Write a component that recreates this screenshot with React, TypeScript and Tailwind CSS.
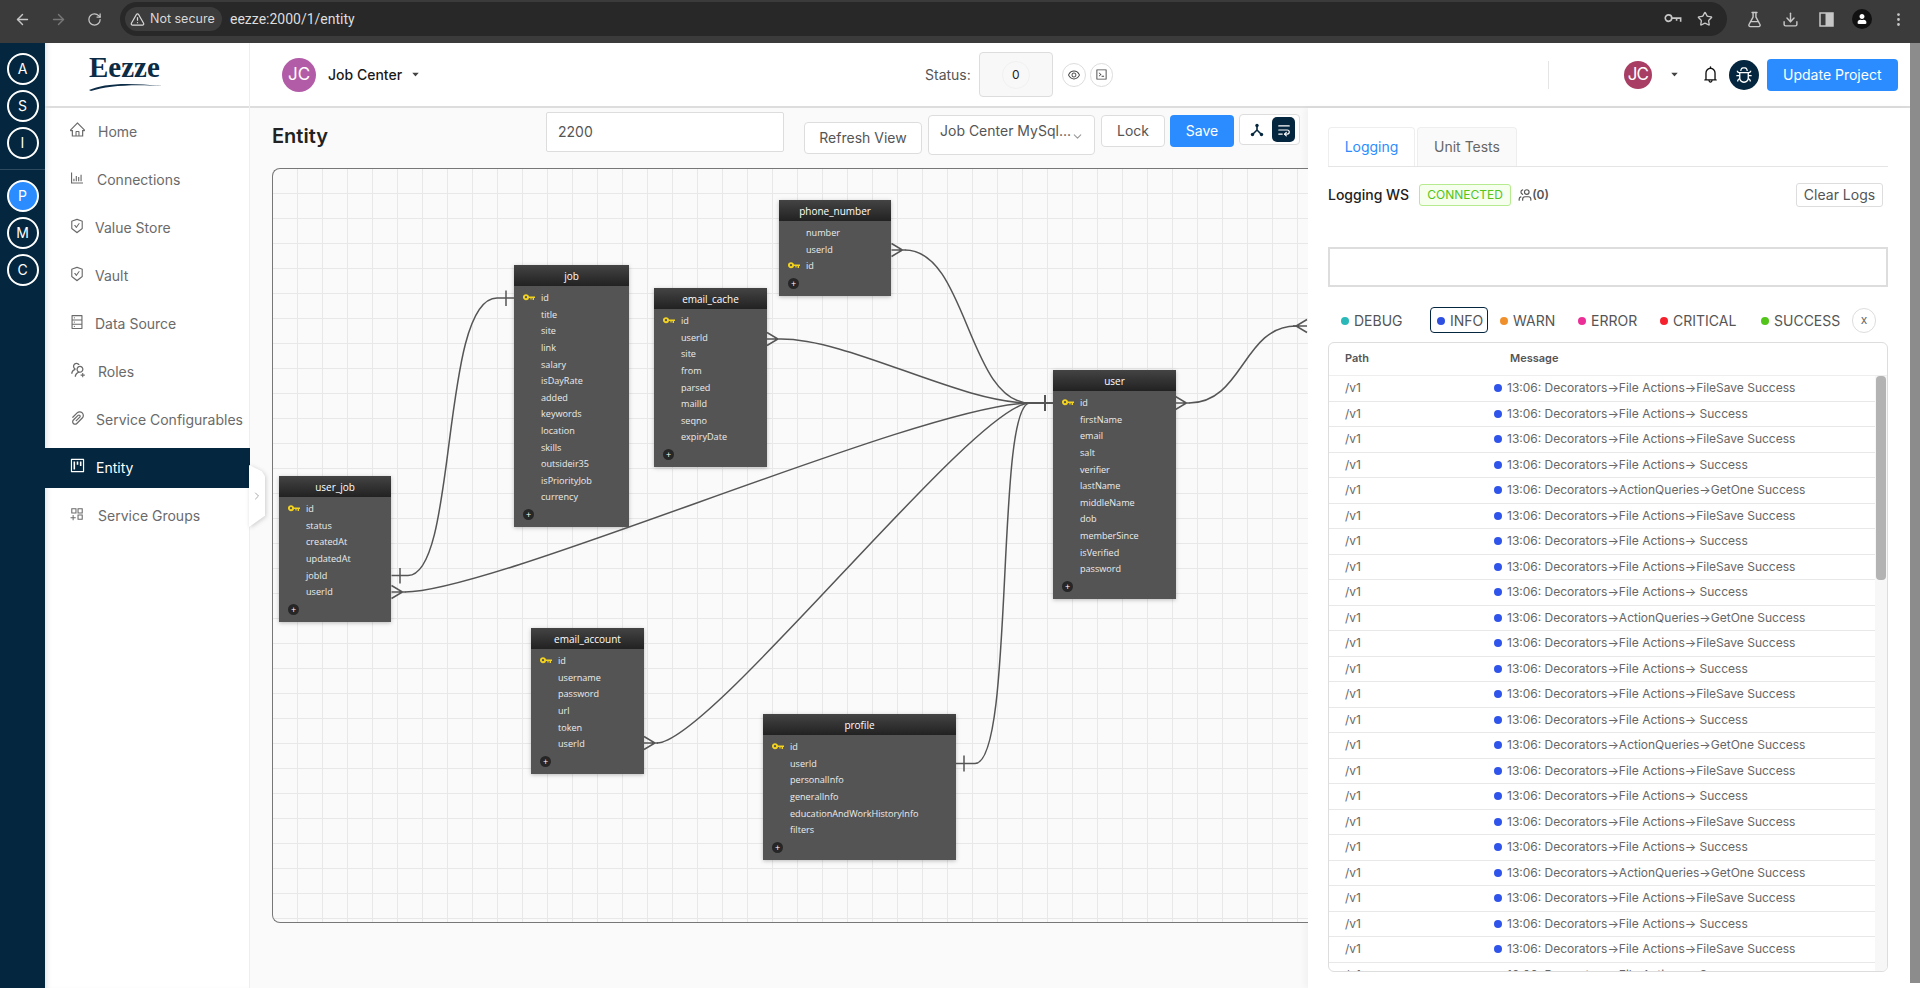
import { ArrowLeft, ArrowRight, ChevronDown, ChevronRight, Download, EllipsisVertical, FlaskConical, RotateCw, Star, TriangleAlert, Users, WrapText } from "lucide-react";
import {
  AiFillCaretDown,
  AiOutlineAppstoreAdd,
  AiOutlineBarChart,
  AiOutlineBell,
  AiOutlineBug,
  AiOutlineCode,
  AiOutlineDatabase,
  AiOutlineEye,
  AiOutlineHome,
  AiOutlinePaperClip,
  AiOutlineProject,
  AiOutlineSafetyCertificate,
  AiOutlineUsergroupAdd,
} from "react-icons/ai";
import { FaUser } from "react-icons/fa";

const navItems = [
  { name: "Home", icon: AiOutlineHome, size: 17, gap: "ml-[12px]" },
  { name: "Connections", icon: AiOutlineBarChart, size: 16, gap: "ml-[12px]" },
  { name: "Value Store", icon: AiOutlineSafetyCertificate, size: 16, gap: "ml-[10px]" },
  { name: "Vault", icon: AiOutlineSafetyCertificate, size: 16, gap: "ml-[10px]" },
  { name: "Data Source", icon: AiOutlineDatabase, size: 16, gap: "ml-[10px]" },
  { name: "Roles", icon: AiOutlineUsergroupAdd, size: 18, gap: "ml-[11px]" },
  { name: "Service Configurables", icon: AiOutlinePaperClip, size: 18, gap: "ml-[9px]" },
  { name: "Entity", icon: AiOutlineProject, size: 17, gap: "ml-[10px]", active: true },
  { name: "Service Groups", icon: AiOutlineAppstoreAdd, size: 16, gap: "ml-[13px]" },
];

const tables = [
  { name: "user_job", pos: "left-[6px] top-[307px] w-[112px]", fields: ["id", "status", "createdAt", "updatedAt", "jobId", "userId"], key: "id" },
  { name: "job", pos: "left-[241px] top-[96px] w-[115px]", fields: ["id", "title", "site", "link", "salary", "isDayRate", "added", "keywords", "location", "skills", "outsideir35", "isPriorityJob", "currency"], key: "id" },
  { name: "email_cache", pos: "left-[381px] top-[119px] w-[113px]", fields: ["id", "userId", "site", "from", "parsed", "mailId", "seqno", "expiryDate"], key: "id" },
  { name: "phone_number", pos: "left-[506px] top-[31px] w-[112px]", fields: ["number", "userId", "id"], key: "id" },
  { name: "user", pos: "left-[780px] top-[201px] w-[123px]", fields: ["id", "firstName", "email", "salt", "verifier", "lastName", "middleName", "dob", "memberSince", "isVerified", "password"], key: "id" },
  { name: "email_account", pos: "left-[258px] top-[459px] w-[113px]", fields: ["id", "username", "password", "url", "token", "userId"], key: "id" },
  { name: "profile", pos: "left-[490px] top-[545px] w-[193px]", fields: ["id", "userId", "personalInfo", "generalInfo", "educationAndWorkHistoryInfo", "filters"], key: "id" },
];

const filters = [
  { name: "DEBUG", dot: "bg-[#2bb8b8]", box: "w-[102px] pl-[13px]" },
  { name: "INFO", dot: "bg-[#2f4fe0]", box: "w-[58px] pl-[6px] h-[26px] border-[1.5px] border-[#04263e] rounded-[4px] mr-[12px]" },
  { name: "WARN", dot: "bg-[#f0902c]", box: "w-[78px]" },
  { name: "ERROR", dot: "bg-[#eb2f96]", box: "w-[82px]" },
  { name: "CRITICAL", dot: "bg-[#f5222d]", box: "w-[101px]" },
  { name: "SUCCESS", dot: "bg-[#52c41a]", box: "w-[91px]" },
];

const save = "13:06: Decorators→File Actions→FileSave Success";
const ok = "13:06: Decorators→File Actions→ Success";
const one = "13:06: Decorators→ActionQueries→GetOne Success";
const logs = Array.from({ length: 24 }, (_, i) => [save, ok, save, ok, one][i % 5]);

function Rail({ letter, active }: { letter: string; active?: boolean }) {
  return (
    <div className={`w-[32px] h-[32px] rounded-full border-2 border-white flex items-center justify-center text-white text-sm ${active ? "bg-[#2a8cff]" : ""}`}>
      {letter}
    </div>
  );
}

function Key() {
  return (
    <svg width="12" height="7" viewBox="0 0 12 7" className="shrink-0">
      <circle cx="3" cy="3.2" r="2.1" fill="none" stroke="#f2d21f" strokeWidth="1.9" />
      <path d="M5 2.4h7v1.6h-1v2h-1.4v-2h-1v1.4h-1.2v-1.4H5z" fill="#f2d21f" />
    </svg>
  );
}

function EntityTable({ t }: { t: (typeof tables)[number] }) {
  return (
    <div className={`absolute ${t.pos} bg-[#545454] shadow-[0_1px_4px_rgba(0,0,0,0.25)] text-[10px] text-[#ececec] font-['Open_Sans',sans-serif]`}>
      <div className="h-[21px] pt-[1px] bg-gradient-to-b from-[#444444] to-[#222222] flex items-center justify-center text-white">{t.name}</div>
      <div className="pt-[3.4px] text-[9.1px]">
        {t.fields.map((f) => (
          <div key={f} className="h-[16.6px] flex items-center pl-[9px]">
            <span className="w-[18px] shrink-0">{f === t.key && <Key />}</span>
            <span className="whitespace-nowrap">{f}</span>
          </div>
        ))}
      </div>
      <div className="h-[22px] pl-[9px] pt-[4px]">
        <div className="w-[11px] h-[11px] rounded-full bg-[#262626] text-white flex items-center justify-center text-[9px] leading-none">+</div>
      </div>
    </div>
  );
}

function Crow({ x, y, dir = 1 }: { x: number; y: number; dir?: number }) {
  return <path d={`M${x} ${y - 6.5} L${x + dir * 11} ${y} L${x} ${y + 6.5} M${x} ${y} L${x + dir * 14} ${y}`} />;
}

function Connectors() {
  return (
    <svg className="absolute left-0 top-0 pointer-events-none" width="1035" height="753" viewBox="273 169 1035 753" fill="none" stroke="#555555" strokeWidth="1.5">
      <Crow x={891.5} y={250} />
      <path d="M905 250 C967 250 968 403 1030 403" />
      <Crow x={767} y={339} />
      <path d="M781 339 C850 339 960 403 1030 403" />
      <Crow x={391.5} y={592} />
      <path d="M405 592 C495 592 925 403 1030 403" />
      <Crow x={644} y={743} />
      <path d="M657 743 C710 743 975 403 1030 403" />
      <path d="M955.5 763.5 H975 M964 755.5 V771.5" />
      <path d="M975 763.5 C1015 763.5 995 403 1030 403" />
      <path d="M391.5 575.5 H408 M400 568 V583.5" />
      <path d="M408 575.5 C458 575.5 440 298 497 298 H514 M506 290.5 V306" />
      <path d="M1030 403 H1053 M1045 395 V411" strokeWidth="2" />
      <Crow x={1175.5} y={403} />
      <path d="M1189 403 C1243 403 1243 326 1296 326" />
      <Crow x={1307} y={326} dir={-1} />
    </svg>
  );
}

export default function App() {
  return (
    <div className="w-[1920px] h-[988px] overflow-hidden flex flex-col bg-white text-sm font-['Inter',sans-serif]">
      {/* browser bar */}
      <div className="h-[43px] shrink-0 bg-[#3b3b3b] flex items-start pt-[2px] pl-[4px] text-[#c7c7c7]">
        <div className="w-[36px] h-[34px] flex items-center justify-center"><ArrowLeft size={17} /></div>
        <div className="w-[36px] h-[34px] flex items-center justify-center text-[#777777]"><ArrowRight size={17} /></div>
        <div className="w-[36px] h-[34px] flex items-center justify-center"><RotateCw size={15} /></div>
        <div className="ml-[8px] w-[1607px] h-[34px] rounded-full bg-[#282828] flex items-center pl-[5px] pr-[14px]">
          <div className="w-[97px] h-[24px] rounded-full bg-[#3c3c3c] flex items-center pl-[5px] text-[12.5px] text-[#d8d8d8] whitespace-nowrap">
            <TriangleAlert size={15} className="mr-[5px] shrink-0" />
            Not secure
          </div>
          <span className="ml-[8px] text-[#dddddd] text-[14px] font-['Roboto',sans-serif]">eezze:2000/1/entity</span>
          <svg width="18" height="12" viewBox="0 0 20 12" fill="none" stroke="#c7c7c7" strokeWidth="1.8" className="ml-auto mr-[15px]">
            <circle cx="5" cy="5" r="3.6" />
            <path d="M8.6 5H18.5V9M14 5V8" />
          </svg>
          <Star size={16} />
        </div>
        <div className="ml-[9px] w-[36px] h-[34px] flex items-center justify-center"><FlaskConical size={17} /></div>
        <div className="w-[36px] h-[34px] flex items-center justify-center"><Download size={17} /></div>
        <div className="w-[36px] h-[34px] flex items-center justify-center">
          <svg width="15" height="15" viewBox="0 0 15 15">
            <path d="M1 1h13v13H1z" fill="none" stroke="#c7c7c7" strokeWidth="1.5" />
            <path d="M6.5 1h7.5v13H6.5z" fill="#c7c7c7" />
          </svg>
        </div>
        <div className="w-[36px] h-[34px] flex items-center justify-center">
          <div className="w-[20px] h-[20px] rounded-full bg-[#111111] flex items-center justify-center text-white"><FaUser size={10} /></div>
        </div>
        <div className="w-[36px] h-[34px] flex items-center justify-center"><EllipsisVertical size={17} /></div>
      </div>

      <div className="flex-1 flex min-h-0">
        {/* project rail */}
        <div className="w-[45px] shrink-0 bg-[#04263e] pt-[10px] flex flex-col">
          <div className="flex flex-col items-center gap-[5px] pb-[10px] border-b border-[#2d4a5f]">
            <Rail letter="A" />
            <Rail letter="S" />
            <Rail letter="I" />
          </div>
          <div className="flex flex-col items-center gap-[5px] pt-[10px]">
            <Rail letter="P" active />
            <Rail letter="M" />
            <Rail letter="C" />
          </div>
        </div>

        {/* sidebar */}
        <div className="relative z-10 w-[205px] shrink-0 bg-white border-r border-[#eeeeee] shadow-[inset_5px_0_5px_-3px_rgba(4,38,62,0.12)]">
          <div className="h-[65px] border-b-2 border-[#dddddd] pl-[44px] pt-[11px]">
            <div className="w-[74px] text-[#0c2c46] font-['Liberation_Serif',serif] font-bold text-[29px] leading-[27px]">Eezze</div>
            <svg width="76" height="9" viewBox="0 0 74 9" className="-ml-[1px] mt-[1px]">
              <path d="M0 8C14 2 34 0 74 4C40 2 18 4 2 9Z" fill="#0c2c46" />
            </svg>
          </div>
          <div className="pt-[4px]">
            {navItems.map((item) => (
              <div key={item.name} className={`w-[205px] h-[40px] mb-[8px] pl-[24px] flex items-center whitespace-nowrap ${item.active ? "bg-[#04263e] text-white" : "text-[#6a6a6a]"}`}>
                <item.icon size={item.size} className="mb-[5px] shrink-0" />
                <span className={item.gap}>{item.name}</span>
              </div>
            ))}
          </div>
          <div className="absolute -right-[16px] top-[422px] w-[16px] h-[62px] drop-shadow-[1px_1px_2px_rgba(0,0,0,0.18)]">
            <div className="w-full h-full bg-white [clip-path:polygon(0_0,80%_10%,100%_18%,100%_82%,0_100%)] flex items-center justify-center text-[#aaaaaa]">
              <ChevronRight size={12} />
            </div>
          </div>
        </div>

        <div className="flex-1 flex flex-col min-w-0">
          {/* top header */}
          <div className="h-[65px] shrink-0 border-b-2 border-[#dddddd] flex items-center pl-[32px] pr-[12px]">
            <div className="w-[34px] h-[34px] shrink-0 rounded-full bg-[#b25ca8] text-white text-[17px] flex items-center justify-center">JC</div>
            <span className="ml-[12px] font-medium text-[#1a1a1a] whitespace-nowrap w-[74px]">Job Center</span>
            <AiFillCaretDown size={9} className="ml-[9px] text-[#444444] shrink-0" />
            <span className="ml-[505px] text-[#555555]">Status:</span>
            <div className="ml-[8px] w-[74px] h-[45px] shrink-0 bg-[#f8f8f8] border border-[#dddddd] rounded-[4px] flex items-center justify-center text-xs text-[#222222]">
              <div className="w-[28px] h-[28px] rounded-full border border-[#f1f1f1] flex items-center justify-center">0</div>
            </div>
            <div className="ml-[9px] w-[24px] h-[24px] shrink-0 rounded-full border border-[#dddddd] flex items-center justify-center text-[#444444]"><AiOutlineEye size={14} /></div>
            <div className="ml-[4px] w-[23px] h-[24px] shrink-0 rounded-full border border-[#dddddd] flex items-center justify-center text-[#444444]"><AiOutlineCode size={13} /></div>
            <div className="ml-[435px] w-px h-[28px] bg-[#e5e5e5] shrink-0" />
            <div className="ml-[75px] w-[28px] h-[28px] shrink-0 rounded-full bg-[#a83e63] text-white text-[17px] flex items-center justify-center tracking-[-1px]">JC</div>
            <AiFillCaretDown size={9} className="ml-[18px] text-[#444444] shrink-0" />
            <AiOutlineBell size={19} className="ml-[22px] text-[#111111] shrink-0" />
            <div className="ml-[9px] w-[30px] h-[30px] shrink-0 rounded-full bg-[#04263e] flex items-center justify-center text-white"><AiOutlineBug size={18} /></div>
            <div className="ml-[8px] w-[131px] h-[32px] shrink-0 rounded-[4px] bg-[#2a8cff] text-white flex items-center justify-center">Update Project</div>
          </div>

          <div className="flex-1 flex min-h-0">
            {/* entity canvas */}
            <div className="w-[1058px] shrink-0 bg-[#fafafa] pl-[22px] overflow-hidden">
              <div className="h-[60px] flex items-start text-[#555555]">
                <h1 className="mt-[14px] w-[274px] text-[20px] font-semibold text-[#222222]">Entity</h1>
                <div className="mt-[4px] w-[238px] h-[40px] bg-white border border-[#dddddd] rounded-[2px] pl-[11px] flex items-center">2200</div>
                <div className="mt-[14px] ml-[20px] w-[118px] h-[32px] bg-white border border-[#dddddd] rounded-[4px] flex items-center justify-center">Refresh View</div>
                <div className="mt-[7px] ml-[6px] w-[167px] h-[40px] bg-white border border-[#dddddd] rounded-[4px] pl-[11px] pt-[5px] whitespace-nowrap relative">
                  Job Center MySql...
                  <ChevronDown size={13} className="absolute right-[10px] top-[14px] text-[#999999]" />
                </div>
                <div className="mt-[7px] ml-[6px] w-[64px] h-[32px] bg-white border border-[#dddddd] rounded-[4px] flex items-center justify-center">Lock</div>
                <div className="mt-[7px] ml-[5px] w-[64px] h-[32px] bg-[#2a8cff] text-white rounded-[4px] flex items-center justify-center">Save</div>
                <div className="mt-[6px] ml-[5px] w-[61px] h-[31px] bg-white border border-[#dddddd] rounded-[4px] flex items-center pl-[10px] gap-[8px] shrink-0">
                  <svg width="14" height="14" viewBox="0 0 14 14" fill="none" stroke="#04263e" strokeWidth="1.6">
                    <path d="M7 2.5V7L2.5 11.5M7 7l4.5 4.5" />
                    <circle cx="7" cy="2.5" r="1.7" fill="#04263e" stroke="none" />
                    <circle cx="2.5" cy="11.5" r="1.7" fill="#04263e" stroke="none" />
                    <circle cx="11.5" cy="11.5" r="1.7" fill="#04263e" stroke="none" />
                  </svg>
                  <div className="w-[23px] h-[25px] rounded-[5px] bg-[#04263e] flex items-center justify-center text-white"><WrapText size={14} /></div>
                </div>
              </div>
              <div className="relative w-[1036px] h-[755px] border border-r-0 border-[#777777] rounded-l-lg overflow-hidden bg-[#fafafa] bg-[linear-gradient(to_right,#e8e8e8_1px,transparent_1px),linear-gradient(to_bottom,#e8e8e8_1px,transparent_1px)] bg-[size:25px_25px] bg-[position:-1px_-1px]">
                {tables.map((t) => (
                  <EntityTable key={t.name} t={t} />
                ))}
                <Connectors />
              </div>
            </div>

            {/* logging panel */}
            <div className="flex-1 bg-white px-[20px] pt-[19px] shadow-[-3px_0_6px_rgba(0,0,0,0.04)] min-w-0">
              <div className="h-[40px] flex items-stretch gap-[2px] border-b border-[#e5e5e5] w-[560px]">
                <div className="w-[87px] bg-white border border-b-0 border-[#eeeeee] rounded-t-[4px] text-[#2a8cff] flex items-center justify-center">Logging</div>
                <div className="w-[100px] bg-[#fafafa] border border-b-0 border-[#eeeeee] rounded-t-[4px] text-[#666666] flex items-center justify-center">Unit Tests</div>
              </div>
              <div className="mt-[16px] h-[24px] w-[555px] flex items-center text-[#222222]">
                <span className="font-medium">Logging WS</span>
                <span className="ml-[10px] w-[92px] h-[22px] bg-[#f6ffed] border border-[#b7eb8f] rounded-[3px] text-[#52c41a] text-xs flex items-center justify-center">CONNECTED</span>
                <Users size={14} className="ml-[7px] -scale-x-100 text-[#555555]" />
                <span className="text-xs font-semibold text-[#555555]">(0)</span>
                <div className="ml-auto w-[87px] h-[24px] border border-[#dddddd] rounded-[3px] text-[#555555] flex items-center justify-center">Clear Logs</div>
              </div>
              <div className="mt-[40px] h-[40px] w-[560px] border-2 border-[#dddddd] bg-white" />
              <div className="mt-[20px] h-[26px] flex items-center text-[#555555]">
                {filters.map((f) => (
                  <div key={f.name} className={`${f.box} flex items-center shrink-0 pt-[1px]`}>
                    <span className={`w-[8px] h-[8px] rounded-full ${f.dot} mr-[5px]`} />
                    {f.name}
                  </div>
                ))}
                <div className="w-[24px] h-[25px] rounded-full border border-[#dddddd] flex items-center justify-center text-xs text-[#666666] shrink-0">x</div>
              </div>
              <div className="mt-[9px] w-[560px] h-[630px] border border-[#dddddd] rounded-[6px] overflow-hidden">
                <div className="h-[33px] flex items-center border-b border-[#eeeeee] text-[11px] font-semibold text-[#555555]">
                  <span className="ml-[16px] w-[165px]">Path</span>
                  <span>Message</span>
                </div>
                <div className="flex h-[595px]">
                  <div className="flex-1 min-w-0 overflow-hidden">
                    {logs.map((msg, i) => (
                      <div key={i} className="h-[25.5px] flex items-center border-b border-[#e8e8e8] text-xs text-[#666666] whitespace-nowrap">
                        <span className="ml-[16px] w-[149px]">/v1</span>
                        <span className="w-[8px] h-[8px] rounded-full bg-[#2f54eb] mr-[5px]" />
                        {msg}
                      </div>
                    ))}
                  </div>
                  <div className="w-[12px] shrink-0 bg-[#f7f7f7] pl-[1px] pr-[1px]">
                    <div className="h-[204px] rounded-[4px] bg-[#b3b3b3]" />
                  </div>
                </div>
              </div>
            </div>
          </div>
        </div>

        {/* page scrollbar */}
        <div className="w-[10px] shrink-0">
          <div className="h-[940px] bg-[#8c8c8c]" />
        </div>
      </div>
    </div>
  );
}
